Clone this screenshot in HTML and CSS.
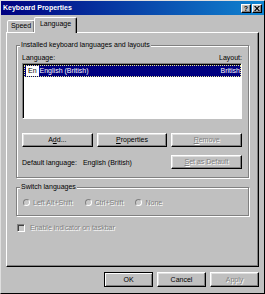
FILE: index.html
```html
<!DOCTYPE html>
<html lang="en">

<head>
    <meta charset="UTF-8">
    <meta name="viewport" content="width=device-width, initial-scale=1.0">
    <title>Keyboard Properties</title>
    <link rel="stylesheet" href="styles.css">
</head>

<body>

    <div class="window">
        <div class="titlebar">
            <span class="title">Keyboard Properties</span>
            <span class="caption-buttons">
                <span class="cap-btn">?</span>
                <span class="cap-btn"><svg width="6" height="5" viewBox="0 0 6 5"><path d="M0 0h1.5L3 1.8 4.5 0H6L3.8 2.5 6 5H4.5L3 3.2 1.5 5H0l2.2-2.5z"/></svg></span>
            </span>
        </div>

        <div class="content">
            <div class="tabs">
                <span class="tab speed">Speed</span>
                <span class="tab active">Language</span>
            </div>

            <div class="panel">
                <div class="group installed">
                    <span class="legend">Installed keyboard languages and layouts</span>
                    <div class="list-head"><span>Language:</span><span>Layout:</span></div>
                    <div class="listbox">
                        <div class="row selected">
                            <span class="badge">En</span>
                            <span class="lang">English (British)</span>
                            <span class="layout">British</span>
                        </div>
                    </div>
                    <div class="btn-row">
                        <button class="btn">A<u>d</u>d...</button>
                        <button class="btn"><u>P</u>roperties</button>
                        <button class="btn" disabled><u>R</u>emove</button>
                    </div>
                    <div class="default-row">
                        <span>Default language:</span>
                        <span class="default-name">English (British)</span>
                        <button class="btn set-default" disabled><u>S</u>et as Default</button>
                    </div>
                </div>

                <div class="group switch">
                    <span class="legend">Switch languages</span>
                    <div class="radios">
                        <span class="option"><span class="radio"></span><span class="off">Left Alt+Shift</span></span>
                        <span class="option"><span class="radio"></span><span class="off">Ctrl+Shift</span></span>
                        <span class="option"><span class="radio"></span><span class="off">None</span></span>
                    </div>
                </div>

                <div class="check-row">
                    <span class="checkbox"></span><span class="off">Enable indicator on taskbar</span>
                </div>
            </div>

            <div class="dialog-buttons">
                <button class="btn wide default">OK</button>
                <button class="btn wide">Cancel</button>
                <button class="btn wide" disabled>Apply</button>
            </div>
        </div>
    </div>

</body>

</html>
```

FILE: styles.css
```css
* {
    box-sizing: border-box;
}

body {
    margin: 0;
    font-family: "Liberation Sans", Arial, sans-serif;
    font-size: 7px;
    color: black;
}

.window {
    width: 265px;
    height: 294px;
    background-color: #c0c0c0;
    border: 1px solid;
    border-color: #dfdfdf #000 #000 #dfdfdf;
}

.titlebar {
    height: 14px;
    display: flex;
    align-items: center;
    justify-content: space-between;
    padding: 0 2px;
    background: linear-gradient(to right, #000080, #1084d0);
    color: white;
    font-weight: bold;
    line-height: 14px;
}

.caption-buttons {
    display: flex;
    gap: 1px;
}

.cap-btn {
    width: 10px;
    height: 9px;
    display: flex;
    align-items: center;
    justify-content: center;
    background-color: #c0c0c0;
    border: 1px solid;
    border-color: #fff #000 #000 #fff;
    box-shadow: inset -1px -1px #808080;
    color: black;
    font-size: 7px;
    line-height: 7px;
}

.content {
    padding: 2px 5px 0 5px;
}

.tabs {
    display: flex;
    align-items: flex-end;
    height: 15px;
    padding-left: 1px;
    position: relative;
    z-index: 1;
}

.tab {
    height: 12px;
    text-align: center;
    line-height: 10px;
    background-color: #c0c0c0;
    border: 1px solid;
    border-bottom: none;
    border-color: #fff #000 transparent #fff;
    border-radius: 2px 2px 0 0;
    box-shadow: inset -1px 0 #808080;
}

.tab.speed {
    width: 28px;
}

.tab.active {
    width: 43px;
    height: 16px;
    margin-left: -1px;
    margin-bottom: -1px;
    line-height: 12px;
}

.panel {
    height: 235px;
    border: 1px solid;
    border-color: #fff #000 #000 #fff;
    box-shadow: inset -1px -1px #808080;
    padding: 12px 9px 0 9px;
}

.group {
    position: relative;
    border: 1px solid #808080;
    box-shadow: inset 1px 1px #fff, 1px 1px #fff;
}

.legend {
    position: absolute;
    top: -5px;
    left: 3px;
    padding: 0 1px;
    line-height: 8px;
    background-color: #c0c0c0;
}

.group.installed {
    padding: 7px 6px 8px 5px;
}

.list-head {
    display: flex;
    justify-content: space-between;
    line-height: 9px;
    height: 9px;
    margin-bottom: 1px;
}

.listbox {
    height: 56px;
    background-color: white;
    border: 1px solid;
    border-color: #808080 #fff #fff #808080;
    box-shadow: inset 1px 1px #000;
    padding: 1px 0 0 1px;
    overflow: hidden;
}

.row {
    display: flex;
    align-items: center;
    height: 12px;
    line-height: 10px;
}

.row.selected {
    background-color: #000080;
    color: white;
    border: 1px dotted #e8e890;
}

.badge {
    background-color: white;
    color: black;
    padding: 0 2px;
    margin-left: 1px;
}

.lang {
    margin-left: 1px;
}

.layout {
    margin-left: auto;
}

.btn {
    font-family: inherit;
    font-size: 7px;
    color: black;
    height: 14px;
    padding: 0;
    background-color: #c0c0c0;
    border: 1px solid;
    border-color: #fff #000 #000 #fff;
    box-shadow: inset -1px -1px #808080, inset 1px 1px #dfdfdf;
    line-height: 10px;
}

.btn:disabled {
    color: #808080;
    text-shadow: 1px 1px 0 #fff;
}

.btn-row {
    display: flex;
    gap: 4px;
    margin-top: 14px;
}

.btn-row .btn {
    flex: 1;
}

.default-row {
    display: flex;
    align-items: center;
    margin-top: 8px;
}

.default-name {
    margin-left: 6px;
}

.set-default {
    margin-left: auto;
    width: 71px;
}

.group.switch {
    margin-top: 9px;
    padding: 10px 6px 8px 6px;
}

.radios {
    display: flex;
    gap: 12px;
    line-height: 9px;
    height: 9px;
}

.option {
    display: flex;
    align-items: center;
    gap: 3px;
}

.radio {
    width: 7px;
    height: 7px;
    border-radius: 50%;
    border: 1px solid;
    border-color: #808080 #fff #fff #808080;
    background-color: #c8c8c8;
}

.off {
    color: #808080;
    text-shadow: 1px 1px 0 #fff;
}

.check-row {
    display: flex;
    align-items: center;
    gap: 5px;
    margin-top: 7px;
    margin-left: 1px;
    height: 9px;
    line-height: 9px;
}

.checkbox {
    width: 8px;
    height: 8px;
    border: 1px solid;
    border-color: #808080 #fff #fff #808080;
    box-shadow: inset 1px 1px #404040;
    background-color: #c8c8c8;
}

.dialog-buttons {
    display: flex;
    justify-content: flex-end;
    gap: 4px;
    margin-top: 5px;
}

.btn.wide {
    width: 49px;
    height: 15px;
}

.btn.default {
    outline: 1px solid #000;
    outline-offset: -1px;
    border-color: #000;
    box-shadow: inset 1px 1px #fff, inset -1px -1px #808080;
}
```
